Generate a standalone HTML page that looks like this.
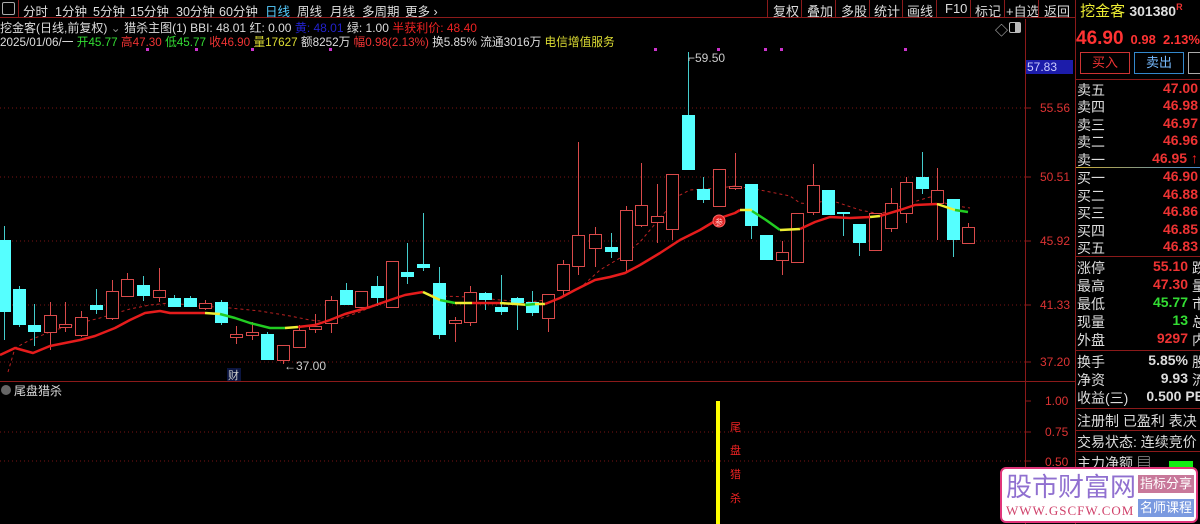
<!DOCTYPE html>
<html><head><meta charset="utf-8"><style>
*{margin:0;padding:0;box-sizing:border-box}
body{width:1200px;height:524px;background:#000;overflow:hidden;position:relative;font-family:"Liberation Sans","Noto Sans CJK SC",sans-serif;font-size:12px;color:#ccc}
.a{position:absolute;white-space:nowrap}
.top{left:0;top:0;width:1075px;height:18px;border-bottom:1px solid #8b1a1a}
.rp{left:1075px;top:0;width:125px;height:524px;border-left:1px solid #8b1a1a}
.ob{position:absolute;left:1px;width:123px;font-size:14px;color:#ddd}
.ob span.v{position:absolute;right:2px;color:#e33;font-weight:bold;font-family:"Liberation Sans",sans-serif}
.m{position:absolute;top:1px;font-size:12.5px;color:#ddd}
</style></head><body>
<div class="a top">
<div class="a" style="left:2px;top:2px;width:13px;height:13px;border:1px solid #aaa;border-radius:2px"></div>
<div class="a" style="left:18px;top:0;width:1px;height:18px;background:#8b1a1a"></div>
<span class="m" style="left:23px">分时</span><span class="m" style="left:55px">1分钟</span><span class="m" style="left:93px">5分钟</span><span class="m" style="left:130px">15分钟</span><span class="m" style="left:176px">30分钟</span><span class="m" style="left:219px">60分钟</span><span class="m" style="left:265px;color:#5cf">日线</span><span class="m" style="left:297px">周线</span><span class="m" style="left:330px">月线</span><span class="m" style="left:362px">多周期</span><span class="m" style="left:405px">更多 ›</span>
<div class="a" style="left:767px;top:0;height:18px;font-size:13px;color:#ddd">
<span class="a" style="left:0;top:0;width:1px;height:18px;background:#8b1a1a"></span>
<span class="a" style="left:6px;top:1px">复权</span><span class="a" style="left:34px;top:0;width:1px;height:18px;background:#8b1a1a"></span>
<span class="a" style="left:40px;top:1px">叠加</span><span class="a" style="left:68px;top:0;width:1px;height:18px;background:#8b1a1a"></span>
<span class="a" style="left:74px;top:1px">多股</span><span class="a" style="left:102px;top:0;width:1px;height:18px;background:#8b1a1a"></span>
<span class="a" style="left:107px;top:1px">统计</span><span class="a" style="left:135px;top:0;width:1px;height:18px;background:#8b1a1a"></span>
<span class="a" style="left:140px;top:1px">画线</span><span class="a" style="left:169px;top:0;width:1px;height:18px;background:#8b1a1a"></span>
<span class="a" style="left:178px;top:1px">F10</span><span class="a" style="left:203px;top:0;width:1px;height:18px;background:#8b1a1a"></span>
<span class="a" style="left:208px;top:1px">标记</span><span class="a" style="left:237px;top:0;width:1px;height:18px;background:#8b1a1a"></span>
<span class="a" style="left:239px;top:1px">+自选</span><span class="a" style="left:271px;top:0;width:1px;height:18px;background:#8b1a1a"></span>
<span class="a" style="left:277px;top:1px">返回</span>
</div>
</div>
<div class="a" style="left:0;top:19px;font-size:12px;color:#ddd">挖金客(日线,前复权) <span style="color:#888">⌄</span> 猎杀主图(1) BBI: 48.01 红: 0.00 <span style="color:#22c">黄: 48.01</span> 绿: 1.00 <span style="color:#e22">半获利价: 48.40</span></div>
<div class="a" style="left:0;top:33px;font-size:11.7px;color:#ddd">2025/01/06/一 <span style="color:#3d3">开45.77</span> <span style="color:#e33">高47.30</span> <span style="color:#3d3">低45.77</span> <span style="color:#e33">收46.90</span> <span style="color:#dd3">量17627</span> 额8252万 <span style="color:#e33">幅0.98(2.13%)</span> 换5.85% 流通3016万 <span style="color:#dd3">电信增值服务</span></div>
<div class="a" style="left:995px;top:20px;color:#ccc;font-size:13px">◇</div>
<div class="a" style="left:1009px;top:22px;width:12px;height:11px;border:1px solid #bbb;border-radius:2px"><div style="position:absolute;right:0;top:0;width:5px;height:9px;background:#bbb"></div></div>

<svg class="a" style="left:0;top:0" width="1075" height="524">
<g stroke="#7a1414" stroke-dasharray="1,3" stroke-width="1">
<line x1="0" y1="108" x2="1025" y2="108"/><line x1="0" y1="177" x2="1025" y2="177"/><line x1="0" y1="241" x2="1025" y2="241"/><line x1="0" y1="305" x2="1025" y2="305"/><line x1="0" y1="362" x2="1025" y2="362"/>
<line x1="0" y1="432" x2="1025" y2="432"/><line x1="0" y1="461" x2="1025" y2="461"/>
</g>
<line x1="1025.5" y1="19" x2="1025.5" y2="524" stroke="#8b1a1a"/>
<line x1="0" y1="381.5" x2="1075" y2="381.5" stroke="#8b1a1a"/>
<g stroke="#8b1a1a"><line x1="1025" y1="108" x2="1031" y2="108"/><line x1="1025" y1="177" x2="1031" y2="177"/><line x1="1025" y1="241" x2="1031" y2="241"/><line x1="1025" y1="305" x2="1031" y2="305"/><line x1="1025" y1="362" x2="1031" y2="362"/><line x1="1025" y1="401" x2="1031" y2="401"/><line x1="1025" y1="432" x2="1031" y2="432"/><line x1="1025" y1="461" x2="1031" y2="461"/></g>
<g fill="#d33" font-size="12" font-family="Liberation Sans">
<text x="1040" y="112">55.56</text><text x="1040" y="181">50.51</text><text x="1040" y="245">45.92</text><text x="1040" y="309">41.33</text><text x="1040" y="366">37.20</text>
<text x="1045" y="405">1.00</text><text x="1045" y="436">0.75</text><text x="1045" y="466">0.50</text>
</g>
<rect x="1026" y="60" width="47" height="14" fill="#1c1caa"/><text x="1027" y="71" fill="#ccf" font-size="12" font-family="Liberation Sans">57.83</text>
<g fill="#c3c">
<rect x="146" y="48" width="3" height="3"/><rect x="195" y="48" width="3" height="3"/><rect x="251" y="48" width="3" height="3"/><rect x="329" y="48" width="3" height="3"/><rect x="654" y="48" width="3" height="3"/><rect x="717" y="48" width="3" height="3"/><rect x="764" y="48" width="3" height="3"/><rect x="780" y="48" width="3" height="3"/><rect x="904" y="48" width="3" height="3"/>
</g>
<polyline fill="none" stroke="#b22" stroke-width="1" stroke-dasharray="3,3" points="8,372 15,348 30,340 55,330 80,323 100,318 130,309 150,305 170,303 200,306 230,308 260,311 290,316 310,320 330,322 360,312 375,305 400,296 420,292 440,296 470,297 500,300 530,302 560,298 580,288 600,270 620,258 640,242 660,218 680,195 690,190 720,188 735,186 760,190 790,196 800,203 810,204 830,200 860,210 880,214 910,203 930,197 950,205 970,208"/>
<g id="c"></g>
<g fill="none" stroke-width="2.5" stroke-linejoin="round">
<polyline stroke="#e51c1c" points="0,355 15,348 33,353 50,346 65,343 80,340 95,336 115,328 130,320 145,313 160,311 170,313 205,313"/>
<polyline stroke="#ee3" points="205,313 220,314"/>
<polyline stroke="#2c2" points="220,314 235,318 250,323 270,328 285,328"/>
<polyline stroke="#ee3" points="285,328 298,327"/>
<polyline stroke="#e51c1c" points="298,327 315,325 330,320 345,314 370,307 390,300 405,295 423,292"/>
<polyline stroke="#ee3" points="423,292 440,300"/>
<polyline stroke="#2c2" points="440,300 455,303"/>
<polyline stroke="#ee3" points="455,303 472,303"/>
<polyline stroke="#e51c1c" points="472,303 500,303"/>
<polyline stroke="#ee3" points="500,303 530,305"/>
<polyline stroke="#2c2" points="525,305 535,304"/>
<polyline stroke="#ee3" points="535,304 545,304"/>
<polyline stroke="#e51c1c" points="545,304 560,298 575,290 595,280 610,277 625,273 640,265 660,253 680,240 700,230 720,218 735,213 740,210"/>
<polyline stroke="#ee3" points="740,210 752,210"/>
<polyline stroke="#2c2" points="752,211 766,220 780,230"/>
<polyline stroke="#ee3" points="780,230 800,229"/>
<polyline stroke="#e51c1c" points="800,229 815,222 830,217 850,218 870,217"/>
<polyline stroke="#ee3" points="870,217 880,216"/>
<polyline stroke="#e51c1c" points="880,216 900,210 915,205 937,204"/>
<polyline stroke="#ee3" points="937,204 955,210"/>
<polyline stroke="#2c2" points="955,210 968,212"/>
</g>
<circle cx="719" cy="221" r="6" fill="#d22" stroke="#f66"/><text x="715" y="225" fill="#fcc" font-size="8">参</text>
<rect x="227" y="368" width="14" height="13" fill="#12236a" opacity=".6"/><text x="228" y="379" fill="#ccc" font-size="11">财</text>
<text x="284" y="370" fill="#ccc" font-size="12" font-family="Liberation Sans">←37.00</text>
<text x="688" y="62" fill="#ccc" font-size="12" font-family="Liberation Sans">⌐59.50</text>
<circle cx="6" cy="390" r="5" fill="#666"/><text x="14" y="395" fill="#ddd" font-size="12">尾盘猎杀</text>
<rect x="716" y="401" width="4" height="123" fill="#ff0"/>
<g fill="#e22" font-size="11"><text x="730" y="431">尾</text><text x="730" y="454">盘</text><text x="730" y="478">猎</text><text x="730" y="502">杀</text></g>
</svg>

<div class="a rp">
<div class="a" style="left:0;top:0;font-size:15px;color:#ee3">&nbsp;挖金客 <span style="color:#ddd;font-size:14px;font-weight:bold;font-family:'Liberation Sans'">301380</span><sup style="color:#e33;font-size:9px;font-weight:bold">R</sup></div>
<div class="a" style="left:0;top:28px;font-family:'Liberation Sans';font-weight:bold;color:#f33"><span style="font-size:19px">46.90</span> <span style="font-size:13px">&nbsp;0.98&nbsp; 2.13%</span></div>
<div class="a" style="left:4px;top:52px;width:50px;height:22px;border:1px solid #c33;color:#e33;text-align:center;font-size:13px;line-height:20px">买入</div>
<div class="a" style="left:58px;top:52px;width:50px;height:22px;border:1px solid #38c;color:#7bf;text-align:center;font-size:13px;line-height:20px">卖出</div>
<div class="a" style="left:112px;top:52px;width:20px;height:22px;border:1px solid #aaa"></div>
<div class="a" style="left:0;top:79px;width:125px;height:1px;background:#8b1a1a"></div>
<div class="ob" style="top:80px">卖五<span class="v">47.00</span></div>
<div class="ob" style="top:97px">卖四<span class="v">46.98</span></div>
<div class="ob" style="top:115px">卖三<span class="v">46.97</span></div>
<div class="ob" style="top:132px">卖二<span class="v">46.96</span></div>
<div class="ob" style="top:150px">卖一<span class="v">46.95 <span style="color:#f22">↑</span></span></div>
<div class="a" style="left:0;top:167px;width:125px;height:1px;background:linear-gradient(90deg,#ca3,#48c)"></div>
<div class="ob" style="top:168px">买一<span class="v">46.90</span></div>
<div class="ob" style="top:186px">买二<span class="v">46.88</span></div>
<div class="ob" style="top:203px">买三<span class="v">46.86</span></div>
<div class="ob" style="top:221px">买四<span class="v">46.85</span></div>
<div class="ob" style="top:238px">买五<span class="v">46.83</span></div>
<div class="a" style="left:0;top:256px;width:125px;height:1px;background:#8b1a1a"></div>
<div class="ob" style="top:258px">涨停<span class="v" style="right:12px">55.10</span><span style="position:absolute;right:-6px">跌</span></div>
<div class="ob" style="top:276px">最高<span class="v" style="right:12px">47.30</span><span style="position:absolute;right:-6px">量</span></div>
<div class="ob" style="top:294px">最低<span class="v" style="right:12px;color:#3d3">45.77</span><span style="position:absolute;right:-6px">市</span></div>
<div class="ob" style="top:312px">现量<span class="v" style="right:12px;color:#3d3">13</span><span style="position:absolute;right:-6px">总</span></div>
<div class="ob" style="top:330px">外盘<span class="v" style="right:12px">9297</span><span style="position:absolute;right:-6px">内</span></div>
<div class="a" style="left:0;top:350px;width:125px;height:1px;background:#8b1a1a"></div>
<div class="ob" style="top:352px">换手<span class="v" style="right:12px;color:#ddd">5.85%</span><span style="position:absolute;right:-6px">股</span></div>
<div class="ob" style="top:370px">净资<span class="v" style="right:12px;color:#ddd">9.93</span><span style="position:absolute;right:-6px">流</span></div>
<div class="ob" style="top:388px">收益(三)<span class="v" style="right:-4px;color:#ddd">0.500 PE</span></div>
<div class="a" style="left:0;top:408px;width:125px;height:1px;background:#8b1a1a"></div>
<div class="ob" style="top:411px">注册制 已盈利 表决</div>
<div class="a" style="left:0;top:430px;width:125px;height:1px;background:#8b1a1a"></div>
<div class="ob" style="top:432px">交易状态: 连续竞价</div>
<div class="a" style="left:0;top:451px;width:125px;height:1px;background:#8b1a1a"></div>
<div class="ob" style="top:453px">主力净额 ▤ <span style="display:inline-block;width:24px;height:7px;background:#1e1;margin-left:14px"></span></div>
</div>

<div class="a" style="left:1000px;top:467px;width:198px;height:56px;background:#fff;border:2px solid #e0357a;border-radius:6px">
<div class="a" style="left:4px;top:2px;font-size:26px;color:#9070d0;font-family:'Noto Sans CJK SC',sans-serif;line-height:30px">股市财富网</div>
<div class="a" style="left:4px;top:34px;font-size:13px;color:#d0406a;font-family:'Liberation Serif',serif;letter-spacing:1px">WWW.GSCFW.COM</div>
<div class="a" style="left:136px;top:6px;width:56px;height:18px;background:#c8789a;color:#fff;font-size:13px;text-align:center;line-height:18px">指标分享</div>
<div class="a" style="left:136px;top:30px;width:56px;height:18px;background:#7a9ae0;color:#fff;font-size:13px;text-align:center;line-height:18px">名师课程</div>
</div>

<script>
var C=[[4,240,312,226,340,0],[19,289,325,286,327,0],[34,325,332,304,346,0],[50,315,332,302,350,1],[65,324,327,302,332,1],[81,317,335,311,337,1],[96,305,310,289,314,0],[112,291,318,280,320,1],[127,279,296,273,296,1],[143,285,296,276,301,0],[159,290,297,268,302,1],[174,298,307,295,307,0],[190,298,307,296,307,0],[205,303,308,300,310,1],[221,302,323,300,325,0],[236,334,337,326,344,1],[252,332,335,322,340,1],[267,334,360,332,360,0],[283,345,360,345,364,1],[299,330,347,325,347,1],[315,326,329,314,333,1],[331,300,323,296,333,1],[346,290,305,283,305,0],[361,291,307,291,307,1],[377,286,298,276,306,0],[392,261,307,261,307,1],[407,272,277,243,284,0],[423,264,268,213,271,0],[439,283,335,267,339,0],[455,320,323,317,342,1],[470,292,322,286,326,1],[485,293,300,292,310,0],[501,307,312,275,315,0],[517,298,303,297,330,0],[532,302,313,291,316,0],[548,294,318,294,332,1],[563,264,290,260,295,1],[578,235,266,142,275,1],[595,234,248,227,267,1],[611,247,252,233,258,0],[626,210,260,206,271,1],[641,205,225,163,227,1],[657,216,222,184,243,1],[672,174,229,174,240,1],[688,115,170,52,170,0],[703,189,200,177,203,0],[719,169,206,169,206,1],[735,186,188,153,190,1],[751,184,226,184,239,0],[766,235,260,235,260,0],[782,252,260,241,275,1],[797,213,262,213,262,1],[813,185,212,164,215,1],[828,190,215,190,215,0],[843,212,214,212,236,0],[859,224,243,224,256,0],[875,213,250,213,250,1],[891,203,228,188,232,1],[906,182,213,177,223,1],[922,177,189,152,194,0],[937,190,203,168,240,1],[953,199,240,199,257,0],[968,227,243,223,243,1]];
var s='';C.forEach(function(c){var x=c[0];
s+='<line x1="'+x+'.5" y1="'+c[3]+'" x2="'+x+'.5" y2="'+c[4]+'" stroke="'+(c[5]?'#d94a4a':'#4cc')+'"/>';
if(c[5])s+='<rect x="'+(x-5.5)+'" y="'+(c[1]+.5)+'" width="12" height="'+Math.max(c[2]-c[1],2)+'" fill="#000" stroke="#d94a4a"/>';
else s+='<rect x="'+(x-6)+'" y="'+c[1]+'" width="13" height="'+Math.max(c[2]-c[1],2)+'" fill="#5ff"/>';});
document.getElementById('c').innerHTML=s;
</script>
</body></html>
